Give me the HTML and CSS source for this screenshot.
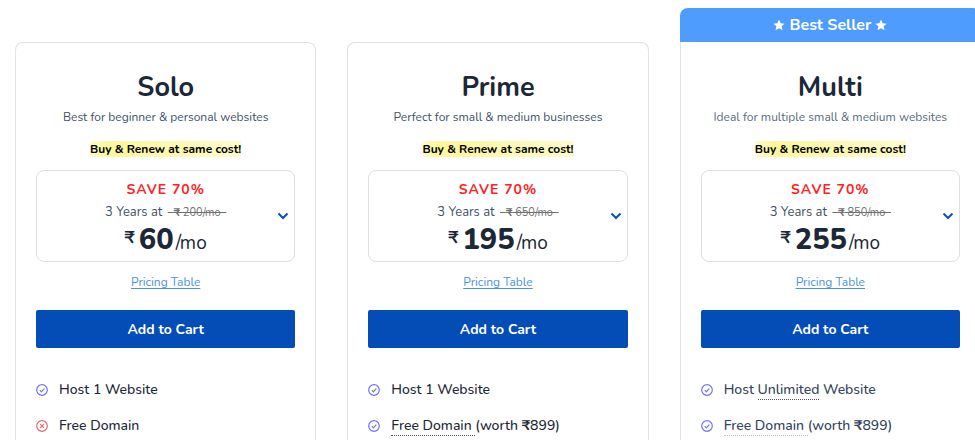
FILE: index.html
```
<!DOCTYPE html>
<html lang="en">
<head>
    <meta charset="UTF-8">
    <meta name="viewport" content="width=device-width, initial-scale=1.0">
    <title>Hosting Plans</title>
    <link rel="stylesheet" href="styles.css">
</head>
<body>
    <svg class="sprite" aria-hidden="true">
        <symbol id="check" viewBox="0 0 12 12">
            <circle cx="6" cy="6" r="5.3"/>
            <path d="M3.8 6.2 5.4 7.8 8.3 4.6"/>
        </symbol>
        <symbol id="cross" viewBox="0 0 12 12">
            <circle cx="6" cy="6" r="5.3"/>
            <path d="M4.2 4.2 7.8 7.8M7.8 4.2 4.2 7.8"/>
        </symbol>
        <symbol id="chevron" viewBox="0 0 12 8">
            <path d="M1.5 1.5 6 6 10.5 1.5"/>
        </symbol>
        <symbol id="star" viewBox="0 0 24 24">
            <path d="M12 1 15.2 8.6 23.4 9.3 17.2 14.6 19.1 22.7 12 18.4 4.9 22.7 6.8 14.6 .6 9.3 8.8 8.6z"/>
        </symbol>
    </svg>

    <main class="plans">
        <section class="plan">
            <div class="plan-body">
                <h2>Solo</h2>
                <p class="tagline">Best for beginner &amp; personal websites</p>
                <p class="renew"><mark>Buy &amp; Renew at same cost!</mark></p>
                <button type="button" class="term" aria-haspopup="listbox">
                    <span class="save">SAVE 70%</span>
                    <span class="period">3 Years at <s>&nbsp;&nbsp;<b>₹</b> 200/mo&nbsp;&nbsp;</s></span>
                    <span class="price"><span class="currency">₹</span><strong>60</strong><span class="per">/mo</span></span>
                    <svg class="chevron" aria-hidden="true"><use href="#chevron"/></svg>
                </button>
                <a class="pricing-link" href="#">Pricing Table</a>
                <button type="button" class="cart">Add to Cart</button>
                <ul class="features">
                    <li><svg class="icon" aria-hidden="true"><use href="#check"/></svg><span>Host 1 Website</span></li>
                    <li><svg class="icon no" aria-hidden="true"><use href="#cross"/></svg><span>Free Domain</span></li>
                </ul>
            </div>
        </section>

        <section class="plan">
            <div class="plan-body">
                <h2>Prime</h2>
                <p class="tagline">Perfect for small &amp; medium businesses</p>
                <p class="renew"><mark>Buy &amp; Renew at same cost!</mark></p>
                <button type="button" class="term" aria-haspopup="listbox">
                    <span class="save">SAVE 70%</span>
                    <span class="period">3 Years at <s>&nbsp;&nbsp;<b>₹</b> 650/mo&nbsp;&nbsp;</s></span>
                    <span class="price"><span class="currency">₹</span><strong>195</strong><span class="per">/mo</span></span>
                    <svg class="chevron" aria-hidden="true"><use href="#chevron"/></svg>
                </button>
                <a class="pricing-link" href="#">Pricing Table</a>
                <button type="button" class="cart">Add to Cart</button>
                <ul class="features">
                    <li><svg class="icon" aria-hidden="true"><use href="#check"/></svg><span>Host 1 Website</span></li>
                    <li><svg class="icon" aria-hidden="true"><use href="#check"/></svg><span><span class="hint">Free Domain&nbsp;</span>(worth <b>₹</b>899)</span></li>
                </ul>
            </div>
        </section>

        <section class="plan best">
            <div class="ribbon">
                <svg class="star" aria-hidden="true"><use href="#star"/></svg>
                Best Seller
                <svg class="star" aria-hidden="true"><use href="#star"/></svg>
            </div>
            <div class="plan-body">
                <h2>Multi</h2>
                <p class="tagline">Ideal for multiple small &amp; medium websites</p>
                <p class="renew"><mark>Buy &amp; Renew at same cost!</mark></p>
                <button type="button" class="term" aria-haspopup="listbox">
                    <span class="save">SAVE 70%</span>
                    <span class="period">3 Years at <s>&nbsp;&nbsp;<b>₹</b> 850/mo&nbsp;&nbsp;</s></span>
                    <span class="price"><span class="currency">₹</span><strong>255</strong><span class="per">/mo</span></span>
                    <svg class="chevron" aria-hidden="true"><use href="#chevron"/></svg>
                </button>
                <a class="pricing-link" href="#">Pricing Table</a>
                <button type="button" class="cart">Add to Cart</button>
                <ul class="features">
                    <li><svg class="icon" aria-hidden="true"><use href="#check"/></svg><span>Host <span class="hint">Unlimited</span> Website</span></li>
                    <li><svg class="icon" aria-hidden="true"><use href="#check"/></svg><span><span class="hint light">Free Domain&nbsp;</span>(worth <b>₹</b>899)</span></li>
                </ul>
            </div>
        </section>
    </main>
</body>
</html>
```
FILE: styles.css
```
* {
    box-sizing: border-box;
}
body {
    margin: 0;
    font-family: 'Nunito', 'Open Sans', sans-serif;
    color: #1c2737;
    background-color: #fff;
    overflow-x: hidden;
}
.sprite {
    display: none;
}
/* the row runs slightly past the right edge of the window */
.plans {
    display: grid;
    grid-template-columns: repeat(3, 1fr);
    gap: 31px;
    align-items: end;
    padding: 8px 0 0 15px;
    margin-right: -6px;
}
.plan-body {
    display: flex;
    flex-direction: column;
    align-items: center;
    padding: 26px 20px 3px;
    border: 1px solid #e2e2e2;
    border-bottom: 0;
    border-radius: 8px 8px 0 0;
}
.best .plan-body {
    border-top: 0;
    border-radius: 0;
    padding-top: 27px;
}
.ribbon {
    display: flex;
    align-items: center;
    justify-content: center;
    gap: 4px;
    height: 34px;
    border-radius: 8px 8px 0 0;
    background-color: #4f9cff;
    color: #fff;
    font-size: 16px;
    font-weight: 700;
}
.star {
    width: 12px;
    height: 12px;
    fill: #fff;
}
h2 {
    margin: 0;
    font-size: 27px;
    line-height: 38px;
    font-weight: 700;
}
.tagline {
    margin: 0;
    font-size: 12px;
    line-height: 20px;
    color: #435269;
}
.renew {
    margin: 14px 0 13px;
    font-size: 12px;
    line-height: 16px;
    font-weight: 700;
}
mark {
    display: block;
    color: #000;
    background: linear-gradient(90deg, #fdfbc9, #fbf79d 12%, #fdfbcb);
    border-radius: 4px 0 0 4px;
}
.term {
    position: relative;
    display: flex;
    flex-direction: column;
    align-items: center;
    width: 100%;
    padding: 9px 0 6px;
    border: 1px solid #dfdfdf;
    border-radius: 8px;
    background-color: #fff;
    color: #1c2737;
    font-family: inherit;
    cursor: pointer;
}
.save {
    font-size: 14px;
    line-height: 20px;
    font-weight: 700;
    letter-spacing: 1px;
    color: #f22;
}
.period {
    font-size: 13px;
    line-height: 24px;
    color: #435269;
}
.period s {
    margin-left: 2px;
    font-size: 11px;
    color: #6f6f6f;
}
.price {
    display: flex;
    align-items: baseline;
    line-height: 30px;
}
.currency {
    align-self: flex-start;
    margin-right: 4px;
    font-size: 17px;
    line-height: 26px;
    font-weight: 700;
}
.price strong {
    font-size: 29px;
    font-weight: 800;
}
.per {
    margin-left: 2px;
    font-size: 19px;
    line-height: 20px;
}
.chevron {
    position: absolute;
    top: 41px;
    right: 5px;
    width: 12px;
    height: 8px;
    fill: none;
    stroke: #0a4fc0;
    stroke-width: 2;
}
.pricing-link {
    margin: 10px 0 18px;
    font-size: 12px;
    line-height: 20px;
    color: #4b91e8;
    text-underline-offset: 2px;
}
.cart {
    width: 100%;
    height: 38px;
    padding: 0;
    border: 0;
    border-radius: 2px;
    background-color: #044db6;
    color: #fff;
    font-family: inherit;
    font-size: 14px;
    font-weight: 700;
    cursor: pointer;
}
.features {
    align-self: stretch;
    margin: 31px 0 0;
    padding: 0;
    list-style: none;
    font-size: 14px;
    line-height: 22px;
    font-weight: 500;
}
.features li {
    display: flex;
    align-items: center;
    gap: 11px;
}
.features li + li {
    margin-top: 14px;
}
.icon {
    width: 12px;
    height: 12px;
    fill: none;
    stroke: #7572f5;
    stroke-width: 1.2;
}
.icon.no {
    stroke: #e46a6a;
}
.hint {
    border-bottom: 1px dotted #555;
}
.hint.light {
    border-color: #bbb;
}
.best .tagline {
    color: #5c6b80;
}
.best .features {
    color: #34435a;
}
```
